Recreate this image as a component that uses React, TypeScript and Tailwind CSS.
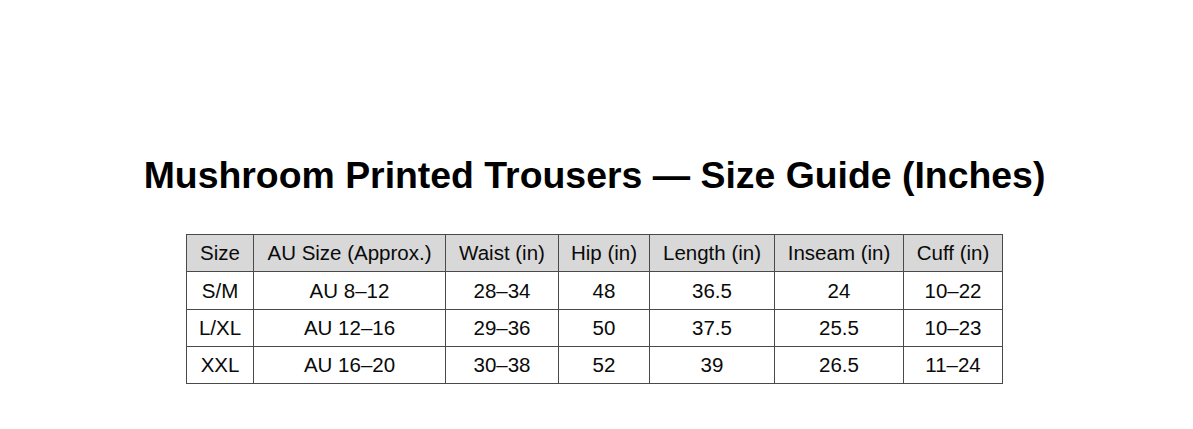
import React from "react";

const headers = ["Size", "AU Size (Approx.)", "Waist (in)", "Hip (in)", "Length (in)", "Inseam (in)", "Cuff (in)"];
const rows = [
  ["S/M", "AU 8–12", "28–34", "48", "36.5", "24", "10–22"],
  ["L/XL", "AU 12–16", "29–36", "50", "37.5", "25.5", "10–23"],
  ["XXL", "AU 16–20", "30–38", "52", "39", "26.5", "11–24"],
];
const heights = ["h-[37px]", "h-[38px]", "h-[37px]", "h-[37px]"];

export default function App() {
  return (
    <div className="w-full min-h-[429px] bg-white font-['Liberation_Sans',Arial,sans-serif] text-[#0a0a0a] flex flex-col pt-[157px]">
      <h1 className="text-center text-[37.4px] leading-[37px] font-bold mr-[4px] text-black">
        Mushroom Printed Trousers — Size Guide (Inches)
      </h1>
      <div className="ml-[186px] mt-[40px] w-[817px] grid grid-cols-[67px_192px_113px_91px_125px_129px_99px] border-l border-t border-[#4a4a4a]">
        {headers.map((h) => (
          <div
            key={h}
            className={`${heights[0]} bg-[#d8d8d8] border-r border-b border-[#4a4a4a] flex items-center justify-center text-[20.5px] pt-[1px]`}
          >
            {h}
          </div>
        ))}
        {rows.map((r, ri) =>
          r.map((c, ci) => (
            <div
              key={`${ri}-${ci}`}
              className={`${heights[ri + 1]} border-r border-b border-[#4a4a4a] flex items-center justify-center text-[20.5px] pt-[1px]`}
            >
              {c}
            </div>
          ))
        )}
      </div>
    </div>
  );
}
